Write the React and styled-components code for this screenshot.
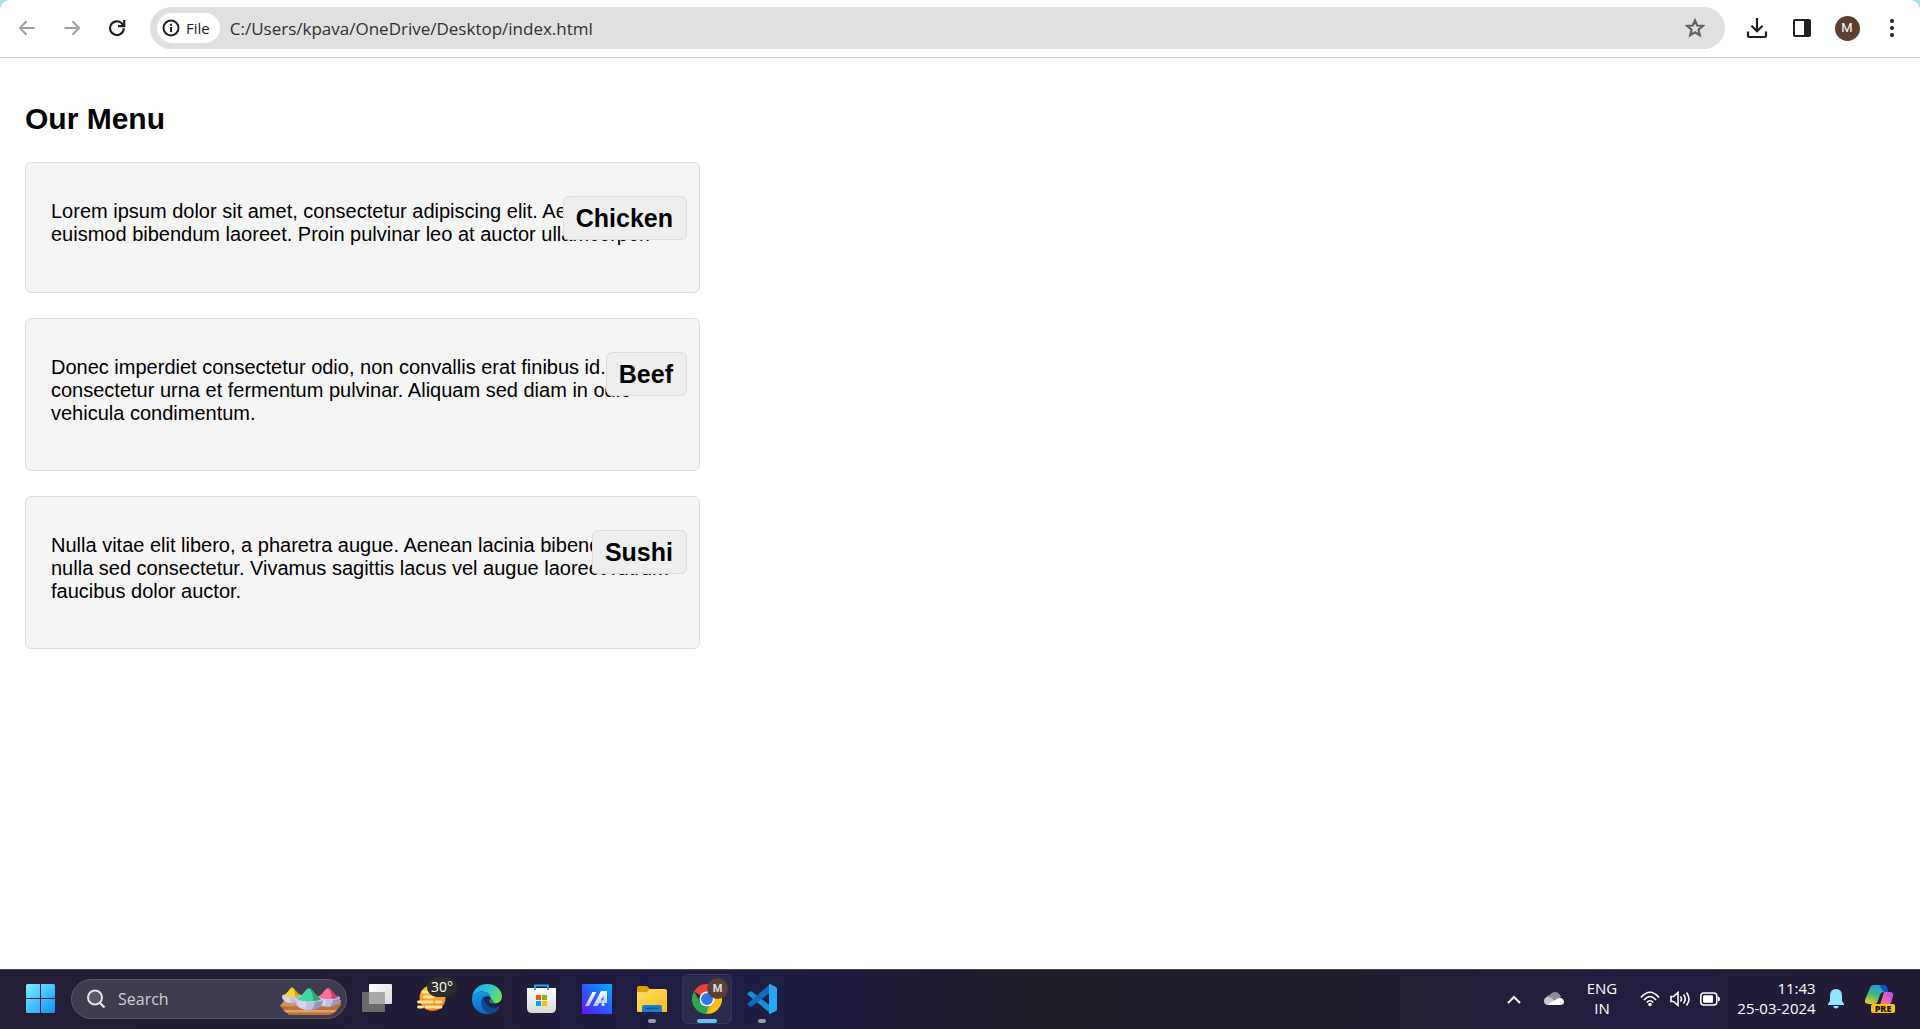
import React, { useState } from "react";
import styled, { createGlobalStyle } from "styled-components";

const GlobalStyle = createGlobalStyle`
  * { box-sizing: border-box; }
  body { margin: 0; background: #fff; }
  button { border: 0; padding: 0; background: none; color: inherit; font: inherit; cursor: pointer; }
  svg { display: block; }
`;

const uiFont = `"Open Sans", "Noto Sans", sans-serif`;

const Screen = styled.div`
  display: flex;
  flex-direction: column;
  min-height: 100vh;
  background: #fff;
`;

/* Browser toolbar */

const ToolbarBackdrop = styled.header`
  background: #a9e3f7;
`;

const Toolbar = styled.div`
  display: flex;
  align-items: center;
  height: 58px;
  padding: 0 12px 1px 11px;
  background: #fff;
  border-bottom: 1px solid #c9c9c9;
  border-radius: 10px 10px 0 0;
  font-family: ${uiFont};
`;

const NavGroup = styled.nav`
  display: flex;
  gap: 13px;
  margin-right: 17px;
`;

const ToolButton = styled.button`
  display: grid;
  place-items: center;
  width: 32px;
  height: 32px;
  color: ${(p) => (p.$muted ? "#a0a0a0" : "#1f2023")};
`;

const AddressBar = styled.form`
  display: flex;
  flex: 1;
  align-items: center;
  height: 42px;
  padding: 0 14px 0 7px;
  border-radius: 21px;
  background: #e0e0e0;
`;

const FileChip = styled.button`
  display: flex;
  align-items: center;
  gap: 6px;
  height: 30px;
  padding: 0 10px 0 5px;
  border-radius: 15px;
  background: #fff;
  color: #1f2023;
  font-size: 15px;
  line-height: 20px;
`;

const UrlInput = styled.input`
  flex: 1;
  min-width: 0;
  height: 32px;
  padding: 0 10px;
  border: 0;
  outline: 0;
  background: transparent;
  color: #303134;
  font-family: ${uiFont};
  font-size: 17px;
`;

const ActionGroup = styled.div`
  display: flex;
  gap: 13px;
  margin-left: 16px;
`;

const Avatar = styled.span`
  display: grid;
  place-items: center;
  width: 25px;
  height: 25px;
  border-radius: 50%;
  background: #5d4032;
  color: #fff;
  font: 13px/24px Roboto, sans-serif;
`;

/* Page */

const Page = styled.main`
  flex: 1;
  padding: 43px 25px;
  color: #000;
  font-family: "Liberation Sans", Arial, sans-serif;
`;

const Title = styled.h1`
  margin: 0 0 26px;
  font-size: 30px;
  line-height: 35px;
`;

const MenuList = styled.div`
  display: flex;
  flex-direction: column;
  gap: 25px;
  max-width: 675px;
`;

const MenuCard = styled.article`
  position: relative;
  min-height: 131px;
  padding: 37px 25px 45px;
  border: 1px solid #ddd;
  border-radius: 6px;
  background: #f5f5f5;
`;

const Description = styled.p`
  margin: 0;
  font-size: 20px;
  line-height: 23px;
`;

const DishName = styled.h2`
  position: absolute;
  top: 33px;
  right: 12px;
  margin: 0;
  padding: 6px 13px 6px 12px;
  border: 1px solid #ddd;
  border-radius: 6px;
  background: #eee;
  font-size: 25px;
  line-height: 30px;
`;

/* Taskbar */

const TaskbarRow = styled.footer`
  display: flex;
  align-items: center;
  justify-content: space-between;
  height: 60px;
  padding: 0 9px 0 16px;
  box-shadow: inset 0 1px #47434f;
  background: linear-gradient(90deg, #231d36 0%, #211d38 25%, #1d1d46 38%, #1f1c3c 44%, #211e2a 54%, #201e2b 68%, #231e3a 78%, #221d3d 86%, #211b35 100%);
  color: #fff;
  font-family: ${uiFont};
`;

const Apps = styled.nav`
  display: flex;
  align-items: center;
  gap: 5px;
`;

const AppButton = styled.button`
  position: relative;
  display: grid;
  place-items: center;
  width: 50px;
  height: 50px;
  border: 1px solid ${(p) => (p.$active ? "#37365a" : "transparent")};
  border-radius: 6px;
  background: ${(p) => (p.$active ? "#2c2b4c" : "transparent")};
`;

const RunMark = styled.span`
  position: absolute;
  bottom: 0;
  left: 50%;
  width: ${(p) => (p.$wide ? 20 : 8)}px;
  height: 4px;
  border-radius: 2px;
  background: ${(p) => (p.$wide ? "#5fc4fb" : "#9a99ab")};
  transform: translateX(-50%);
`;

const TempBadge = styled.span`
  position: absolute;
  top: 2px;
  right: -1px;
  padding: 0 4px;
  border-radius: 10px;
  background: #2c2c2c;
  font-size: 14px;
  line-height: 20px;
`;

const ProfileBadge = styled.span`
  position: absolute;
  top: 3px;
  right: 3px;
  width: 21px;
  height: 21px;
  border-radius: 50%;
  background: #5b4035;
  color: #ddd;
  font: bold 11px/21px Roboto, sans-serif;
  text-align: center;
`;

const SearchBox = styled.label`
  display: flex;
  align-items: center;
  width: 276px;
  height: 40px;
  padding: 0 3px 0 14px;
  border: 1px solid #5a5767;
  border-radius: 20px;
  background: #403c50;
`;

const SearchInput = styled.input`
  flex: 1;
  min-width: 0;
  padding: 0 0 0 12px;
  border: 0;
  outline: 0;
  background: transparent;
  color: #fff;
  font-family: ${uiFont};
  font-size: 16px;
  &::placeholder { color: #cfced6; opacity: 1; }
`;

const Tray = styled.div`
  display: flex;
  align-items: center;
`;

const TrayButton = styled.button`
  display: flex;
  align-items: center;
  justify-content: center;
  gap: ${(p) => p.$gap || 0}px;
  min-width: ${(p) => p.$width}px;
  height: 50px;
`;

const TrayText = styled.span`
  display: block;
  padding-bottom: 2px;
  font-size: 15px;
  line-height: 20px;
  text-align: ${(p) => p.$align};
`;

/* Icons */

const Svg = ({ w = 24, h = w, box, children, ...rest }) => (
  <svg width={w} height={h} viewBox={box || `0 0 ${w} ${h}`} fill="none" aria-hidden="true" {...rest}>
    {children}
  </svg>
);

const ArrowIcon = ({ right }) => (
  <Svg w={16} stroke="currentColor" strokeWidth="2">
    {right ? <path d="M0.500 8H15M8.500 1.200 15.200 8 8.500 14.800" /> : <path d="M15.500 8H1M7.500 1.200.8 8l6.700 6.800" />}
  </Svg>
);

const ReloadIcon = () => (
  <Svg w={18} stroke="currentColor" strokeWidth="2.200">
    <path d="M15.800 9.300a6.900 6.900 0 1 1-2.100-5.100l2.100 2.300" />
    <path d="M16.200 1v6.200H10" />
  </Svg>
);

const InfoIcon = () => (
  <Svg w={18} stroke="currentColor" strokeWidth="2">
    <circle cx="9" cy="9" r="7.500" />
    <path d="M9 8v5M9 4.800v2" />
  </Svg>
);

const StarIcon = () => (
  <Svg w={20} stroke="#5f6164" strokeWidth="2.200">
    <path d="m10 2.500 2.200 5 5.600.5-4.300 3.700 1.300 5.500L10 14.300l-4.800 2.900 1.300-5.500L2.200 8l5.600-.5z" />
  </Svg>
);

const DownloadIcon = () => (
  <Svg w={22} stroke="currentColor" strokeWidth="2.200">
    <path d="M11 1v13M5.500 8.700l5.500 5.500 5.500-5.500M2 14.500V19q0 1 1 1h16q1 0 1-1v-4.500" />
  </Svg>
);

const SidePanelIcon = () => (
  <Svg w={18}>
    <rect x="1" y="1" width="16" height="16" rx="1" stroke="currentColor" strokeWidth="2" />
    <path d="M11 1h6v16h-6z" fill="currentColor" />
  </Svg>
);

const DotsIcon = () => (
  <Svg w={18} fill="currentColor">
    <circle cx="9" cy="2" r="2" /><circle cx="9" cy="9" r="2" /><circle cx="9" cy="16" r="2" />
  </Svg>
);

const WindowsIcon = () => (
  <Svg w={30}>
    <defs>
      <linearGradient id="win" x1="0" y1="0" x2="1" y2="1">
        <stop stopColor="#7df0ff" /><stop offset=".5" stopColor="#45c0fb" /><stop offset="1" stopColor="#0a93fa" />
      </linearGradient>
    </defs>
    <path fill="url(#win)" d="M1.500 0H14v14H0V1.500Q0 0 1.500 0M15 0h12.500Q29 0 29 1.500V14H15zM0 15h14v14H1.500Q0 29 0 27.500zM15 15h14v12.500q0 1.500-1.500 1.500H15z" />
  </Svg>
);

const SearchIcon = () => (
  <Svg w={20} stroke="#e2e1e6" strokeWidth="2">
    <circle cx="9" cy="8.500" r="7" fill="#5a5768" />
    <path d="m14 14 4.500 4.500" strokeWidth="2.400" />
  </Svg>
);

const Bowl = ({ x, y, s, powder, shade }) => (
  <g transform={`translate(${x} ${y}) scale(${s})`}>
    <path d="M0 14h28q0 6-6 8.500Q14 26 6 22.500 0 20 0 14" fill="#9497c2" />
    <path d="M0 14h20q0 7-4 10-5 .5-10-1.500Q0 20 0 14" fill="#bfc1de" />
    <path d="M2 14h9q1 6-1 9.500-8-1-8-9.500" fill="#d4d6ea" />
    <ellipse cx="14" cy="13.500" rx="14" ry="2.500" fill="#cfd1ea" />
    <path d="M2 13.500Q7 9.500 11 4q3-3.500 6 0 4 5.500 9 9.500-12 4-24 0" fill={powder} />
    <path d="M14 2.300q1.600.2 3 1.700 4 5.500 9 9.500-3 1.300-8 1.500Q19 8 14 2.300" fill={shade} />
  </g>
);

const FestivalIcon = () => (
  <Svg w={64} h={32}>
    <path d="M6 17h56v5l-6 7-5 3H10l-9-9z" fill="#b9733a" />
    <path d="M1 23 6 17h56l-2 4-20 3z" fill="#d99150" />
    <path d="M4 27h54l-3 2.500H7z" fill="#e0a266" />
    <Bowl x={3} y={3} s={0.72} powder="#f5d431" shade="#d0a21a" />
    <Bowl x={37} y={3} s={0.86} powder="#fb6f98" shade="#d33a6a" />
    <Bowl x={16} y={3} s={1} powder="#3ed8a0" shade="#33a46c" />
  </Svg>
);

const TaskViewIcon = () => (
  <Svg w={30}>
    <defs>
      <linearGradient id="tv" x2="1" y2="1"><stop stopColor="#fff" /><stop offset="1" stopColor="#d9d9dc" /></linearGradient>
    </defs>
    <rect y="8" width="23" height="20" rx="1" fill="#6b6a6d" />
    <rect x="7" width="23" height="20" rx="1" fill="url(#tv)" />
    <path d="M7 8h15q1 0 1 1v11H8q-1 0-1-1z" fill="#a9a9ab" />
  </Svg>
);

const WeatherIcon = () => (
  <Svg w={30}>
    <defs>
      <linearGradient id="sun" x2="0" y2="1"><stop stopColor="#ffc928" /><stop offset="1" stopColor="#f47a18" /></linearGradient>
    </defs>
    <circle cx="15.500" cy="14" r="13" fill="url(#sun)" />
    <path d="M6 8h9M1.500 18h14M19 18h5M7 13h9M1.500 23h4M9 23h15" stroke="#ffe3a0" strokeWidth="2.800" strokeLinecap="round" />
  </Svg>
);

const EdgeIcon = () => (
  <Svg w={30} box="0 0 30 30">
    <defs>
      <linearGradient id="e1" x2="1" y2=".5"><stop stopColor="#1ba3e8" /><stop offset=".55" stopColor="#2fc5cf" /><stop offset="1" stopColor="#66e05b" /></linearGradient>
      <linearGradient id="e2" x2=".5" y2="1"><stop stopColor="#1c9de6" /><stop offset="1" stopColor="#0c63c4" /></linearGradient>
    </defs>
    <path d="M0 14C1 5 7 0 15 0c9 0 15 6 15 12.500 0 4-3 7-7.500 7-4 0-5.500-1.500-5.300-2.500.2-.8 1.300-1.500 1.300-3.500 0-3-3.500-6-8.500-6C5.500 7.500 1.500 10 0 14" fill="url(#e1)" />
    <path d="M0 14C1.500 10 5.500 7.500 10 7.500c5 0 8.500 3 8.500 6-7-4-11 5-3 11 4 3 9 2 12-1C25 27.500 20.500 30 15 30 6 30-.6 23 0 14" fill="url(#e2)" />
    <path d="M12 12c-3 3-4 9 0 14 2 2.500 4 3.500 6 3.700 4-.8 7.500-3.200 9.500-6.200.5-.8 0-1.300-.8-.9C19 26.500 12.500 20 12 12" fill="#11488f" />
    <path d="M18.500 13.500c-3-3-6-1.500-6.500 1.500 0 5 5 10.500 14 8" fill="#16305f" opacity=".55" />
  </Svg>
);

const StoreIcon = () => (
  <Svg w={30}>
    <defs><linearGradient id="bag" x2="0" y2="1"><stop stopColor="#fff" /><stop offset="1" stopColor="#d8d8da" /></linearGradient></defs>
    <path d="M8 6V1.500h13V6" stroke="#25a7f0" strokeWidth="2" />
    <path d="M0 4h29v20q0 5-5 5H5q-5 0-5-5z" fill="url(#bag)" />
    <path d="M8 6V4M21 6V4" stroke="#25a7f0" strokeWidth="2" />
    <path d="M9 11h5v5H9z" fill="#f25022" /><path d="M15 11h5v5h-5z" fill="#7fba00" />
    <path d="M9 17h5v5H9z" fill="#00a4ef" /><path d="M15 17h5v5h-5z" fill="#ffb900" />
  </Svg>
);

const AsusIcon = () => (
  <Svg w={30}>
    <defs>
      <linearGradient id="as" x1="0" y1="1" x2="1" y2="0"><stop stopColor="#6312ff" /><stop offset=".5" stopColor="#2b5bff" /><stop offset="1" stopColor="#00b2ff" /></linearGradient>
      <linearGradient id="aw" x2="0" y2="1"><stop stopColor="#fff" /><stop offset="1" stopColor="#b9c4ff" /></linearGradient>
    </defs>
    <path d="M0 0h30v30H0z" fill="url(#as)" />
    <path d="M10.500 8h4L7 22H3zM19 7h6v11h-3.500v-6L15.500 22H11zM17.500 16.500H25v2.500h-9z" fill="url(#aw)" />
    <circle cx="21" cy="20.500" r="1.500" fill="#fff" />
  </Svg>
);

const FolderIcon = () => (
  <Svg w={30}>
    <defs><linearGradient id="fo" x2="1" y2="1"><stop stopColor="#ffdc6b" /><stop offset="1" stopColor="#fdbd18" /></linearGradient></defs>
    <path d="M0 4q0-2 2-2h8l3 3h15v8H0z" fill="#e0a100" />
    <path d="M0 8h10l3-3h15q2 0 2 2v21H1q-1 0-1-1z" fill="url(#fo)" />
    <path d="M5 28v-5q0-2 2-2h16q2 0 2 2v5z" fill="#1182d2" />
    <path d="M9 24.500h12" stroke="#0a4d8c" strokeWidth="1.500" strokeLinecap="round" />
  </Svg>
);

const ChromeIcon = () => (
  <Svg w={30} box="0 0 48 48">
    <path d="M24 24 3.200 12A24 24 0 0 1 44.800 12z" fill="#ea4335" />
    <path d="M24 12h20.800A24 24 0 0 1 24 48l10.400-18z" fill="#fbc116" />
    <path d="M3.200 12 13.600 30 24 36h4.500L24 48A24 24 0 0 1 3.200 12" fill="#30a552" />
    <path d="m34.400 30-10.400 18-1.500-.1L28 34z" fill="#fbc116" />
    <circle cx="24" cy="24" r="12" fill="#fff" />
    <circle cx="24" cy="24" r="9.500" fill="#3076ea" />
  </Svg>
);

const CodeIcon = () => (
  <Svg w={30}>
    <path d="m1 9 2-1.500q1-.6 2 .2L23 21.500V29L.8 10.800Q0 10 1 9" fill="#1b8fd6" />
    <path d="m1 21 2 1.500q1 .6 2-.2L23 8.500V0L.8 19.200Q0 20 1 21" fill="#0b6eb5" />
    <path d="M22 0q.5-.2 1 0l6 3q1 .5 1 1.600v20.800q0 1.100-1 1.600l-6 3q-.5.200-1 0z" fill="#2aa7f2" />
  </Svg>
);

const ChevronIcon = () => (
  <Svg w={14} h={9} stroke="#fff" strokeWidth="2"><path d="m1 8 6-6 6 6" /></Svg>
);

const CloudIcon = () => (
  <Svg w={20} h={14}>
    <path d="M2 8C2 4 4 3 6 3c1-2 3-3 5-3 3 0 5 2 6 5l-7 5z" fill="#918d9f" />
    <path d="M0 9q0-4 4-4 3 0 6 3l6 5H4Q0 13 0 9" fill="#c8c6cf" />
    <path d="M3 13 13 7q1.500-1.500 4-1 3 1 3 4 0 3-4 3H4z" fill="#fff" />
  </Svg>
);

const WifiIcon = () => (
  <Svg w={20} h={16} stroke="#fff" strokeWidth="1.700">
    <path d="M1 6.500q9-10.500 18 0M4 9q6-7 12 0M6.800 11.500q3.200-3.500 6.400 0" />
    <circle cx="10" cy="13.500" r="1.800" fill="#fff" stroke="none" />
  </Svg>
);

const SpeakerIcon = () => (
  <Svg w={20} h={16} stroke="#fff" strokeWidth="1.600">
    <path d="M1 5.500h2.500L8 1.500v13l-4.500-4H1zM10.500 5.500q2 2.500 0 5M13.500 3.500q3.500 4.500 0 9M16.500 1.500q5 6.500 0 13" />
  </Svg>
);

const BatteryIcon = () => (
  <Svg w={20} h={14}>
    <rect x=".8" y="1" width="16" height="12" rx="3" stroke="#fff" strokeWidth="1.600" />
    <rect x="3" y="3.200" width="10" height="7.600" rx="1" fill="#fff" />
    <path d="M18 4.500q2 0 2 2.500t-2 2.500z" fill="#fff" />
  </Svg>
);

const BellIcon = () => (
  <Svg w={16} h={20}>
    <path d="M8 0q6 0 6 7v5l2 3v1H0v-1l2-3V7q0-7 6-7M5 17h6q-1 2.500-3 2.500T5 17" fill="#93e4fd" />
  </Svg>
);

const CopilotIcon = () => (
  <Svg w={30}>
    <defs>
      <linearGradient id="c1" x1=".6" x2=".2" y2="1"><stop stopColor="#1c9ff0" /><stop offset=".5" stopColor="#3fb878" /><stop offset="1" stopColor="#f0ce28" /></linearGradient>
      <linearGradient id="c2" x1="1" x2="0" y2="1"><stop stopColor="#a650f5" /><stop offset=".6" stopColor="#e765b0" /><stop offset="1" stopColor="#ff8a4a" /></linearGradient>
    </defs>
    <path d="M9 1h9q3 0 4 3l1 4h-4q-3 0-4 3l-3 8q-1 1-4 1H4q-5 0-4-4L5 4q1-3 4-3" fill="url(#c1)" />
    <path d="M14 1h4q3 0 4 3l1 4h-4z" fill="#1551cf" />
    <path d="M19 8h6q4 0 3 4l-2 7q-1 2-4 2h-7z" fill="url(#c2)" />
    <rect x="6" y="20" width="24" height="9" rx="2" fill="#fdc30a" />
    <text x="18" y="27.500" textAnchor="middle" fill="#1d1a10" fontFamily="Open Sans, sans-serif" fontWeight="800" fontSize="9">PRE</text>
  </Svg>
);

const dishes = [
  {
    name: "Chicken",
    text: "Lorem ipsum dolor sit amet, consectetur adipiscing elit. Aenean euismod bibendum laoreet. Proin pulvinar leo at auctor ullamcorper.",
  },
  {
    name: "Beef",
    text: "Donec imperdiet consectetur odio, non convallis erat finibus id. Nulla consectetur urna et fermentum pulvinar. Aliquam sed diam in odio vehicula condimentum.",
  },
  {
    name: "Sushi",
    text: "Nulla vitae elit libero, a pharetra augue. Aenean lacinia bibendum nulla sed consectetur. Vivamus sagittis lacus vel augue laoreet rutrum faucibus dolor auctor.",
  },
];

const apps = [
  { label: "Task view", Icon: TaskViewIcon },
  { label: "Weather", Icon: WeatherIcon, temperature: "30°" },
  { label: "Microsoft Edge", Icon: EdgeIcon },
  { label: "Microsoft Store", Icon: StoreIcon },
  { label: "MyASUS", Icon: AsusIcon },
  { label: "File Explorer", Icon: FolderIcon, running: true },
  { label: "Google Chrome", Icon: ChromeIcon, running: true, active: true, profile: "M" },
  { label: "Visual Studio Code", Icon: CodeIcon, running: true },
];

function BrowserToolbar() {
  const [url, setUrl] = useState("C:/Users/kpava/OneDrive/Desktop/index.html");
  return (
    <ToolbarBackdrop>
      <Toolbar>
        <NavGroup>
          <ToolButton $muted aria-label="Back"><ArrowIcon /></ToolButton>
          <ToolButton $muted aria-label="Forward"><ArrowIcon right /></ToolButton>
          <ToolButton aria-label="Reload"><ReloadIcon /></ToolButton>
        </NavGroup>
        <AddressBar onSubmit={(e) => e.preventDefault()}>
          <FileChip type="button"><InfoIcon />File</FileChip>
          <UrlInput aria-label="Address" value={url} spellCheck={false} onChange={(e) => setUrl(e.target.value)} />
          <ToolButton type="button" aria-label="Bookmark"><StarIcon /></ToolButton>
        </AddressBar>
        <ActionGroup>
          <ToolButton aria-label="Downloads"><DownloadIcon /></ToolButton>
          <ToolButton aria-label="Side panel"><SidePanelIcon /></ToolButton>
          <ToolButton aria-label="Profile"><Avatar>M</Avatar></ToolButton>
          <ToolButton aria-label="Browser menu"><DotsIcon /></ToolButton>
        </ActionGroup>
      </Toolbar>
    </ToolbarBackdrop>
  );
}

function Taskbar() {
  return (
    <TaskbarRow>
      <Apps>
        <AppButton aria-label="Start"><WindowsIcon /></AppButton>
        <SearchBox>
          <SearchIcon />
          <SearchInput aria-label="Search" placeholder="Search" />
          <FestivalIcon />
        </SearchBox>
        {apps.map(({ label, Icon, temperature, running, active, profile }) => (
          <AppButton key={label} aria-label={label} $active={active}>
            <Icon />
            {temperature && <TempBadge>{temperature}</TempBadge>}
            {profile && <ProfileBadge>{profile}</ProfileBadge>}
            {running && <RunMark $wide={active} />}
          </AppButton>
        ))}
      </Apps>
      <Tray>
        <TrayButton $width={40} aria-label="Hidden icons"><ChevronIcon /></TrayButton>
        <TrayButton $width={40} aria-label="OneDrive"><CloudIcon /></TrayButton>
        <TrayButton $width={56}><TrayText $align="center">ENG<br />IN</TrayText></TrayButton>
        <TrayButton $width={100} $gap={10} aria-label="Network, volume and battery">
          <WifiIcon /><SpeakerIcon /><BatteryIcon />
        </TrayButton>
        <TrayButton $width={93}><TrayText $align="right">11:43<br />25-03-2024</TrayText></TrayButton>
        <TrayButton $width={26} aria-label="Notifications"><BellIcon /></TrayButton>
        <TrayButton $width={62} aria-label="Copilot"><CopilotIcon /></TrayButton>
      </Tray>
    </TaskbarRow>
  );
}

export default function App() {
  return (
    <Screen>
      <GlobalStyle />
      <BrowserToolbar />
      <Page>
        <Title>Our Menu</Title>
        <MenuList>
          {dishes.map((dish) => (
            <MenuCard key={dish.name}>
              <DishName>{dish.name}</DishName>
              <Description>{dish.text}</Description>
            </MenuCard>
          ))}
        </MenuList>
      </Page>
      <Taskbar />
    </Screen>
  );
}
